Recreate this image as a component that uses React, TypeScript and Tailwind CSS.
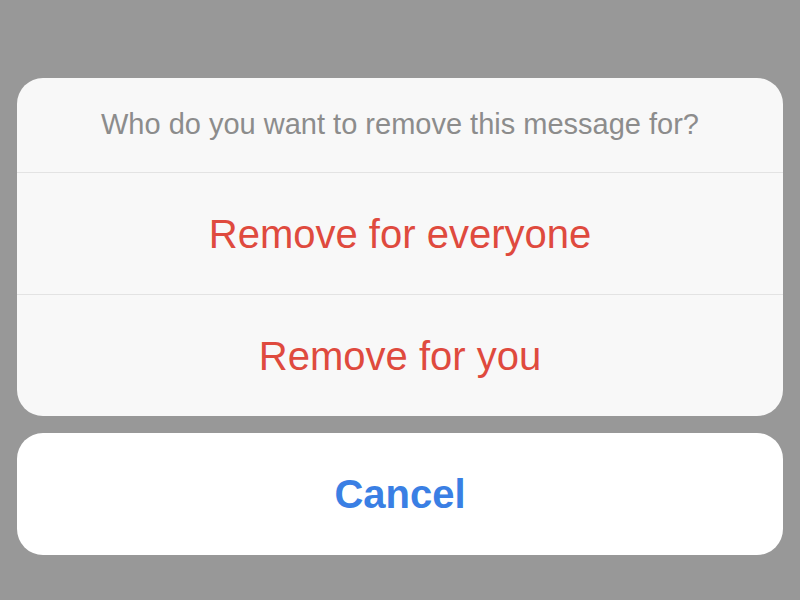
import React from "react";

export default function App() {
  return (
    <div
      className="w-[800px] h-[600px] bg-[#989898] flex flex-col px-[17px] pt-[78px] overflow-hidden"
      style={{ fontFamily: '"Liberation Sans", Arial, sans-serif' }}
    >
      <div className="bg-[#f8f8f8] rounded-[26px] flex flex-col overflow-hidden">
        <div className="h-[95px] flex items-center justify-center text-[29px] text-[#8c8c8c] border-b border-[#e3e3e3]">
          Who do you want to remove this message for?
        </div>
        <div className="h-[122px] flex items-center justify-center text-[40px] text-[#df4a3e] border-b border-[#e3e3e3]">
          Remove for everyone
        </div>
        <div className="h-[121px] flex items-center justify-center text-[40px] text-[#df4a3e]">
          Remove for you
        </div>
      </div>
      <div className="mt-[17px] h-[122px] bg-white rounded-[26px] flex items-center justify-center text-[40px] font-bold text-[#3a7fe4]">
        Cancel
      </div>
    </div>
  );
}
